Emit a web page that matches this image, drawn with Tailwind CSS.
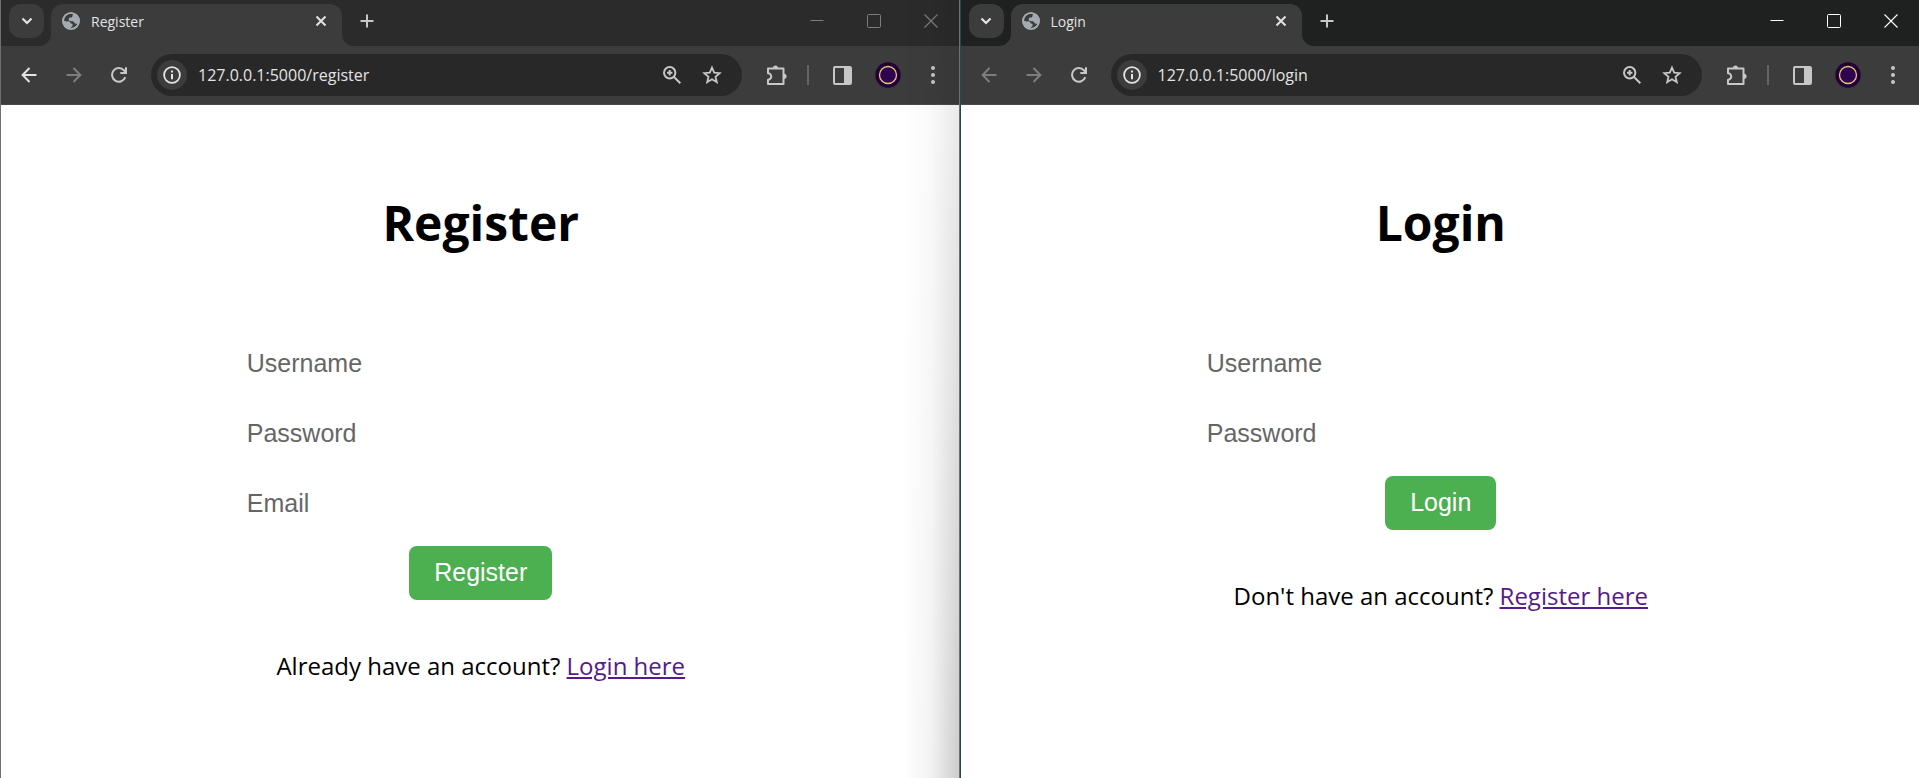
<!DOCTYPE html>
<html lang="en">
<head>
<meta charset="utf-8">
<title>Register and Login</title>
<script src="https://cdn.jsdelivr.net/npm/@tailwindcss/browser@4"></script>
</head>
<body class="min-h-screen bg-white font-['Open_Sans','Noto_Sans',sans-serif]">
<svg class="hidden">
  <symbol id="chevron" viewBox="0 0 12 12"><path d="M1.5 3.5 6 8l4.500-4.500" fill="none" stroke="currentColor" stroke-width="2.200"/></symbol>
  <symbol id="globe" viewBox="0 0 18 18"><circle cx="9" cy="9" r="8.800" fill="#a4aab1"/><path d="M6.200 2.200C3.500 3.200 1.900 6 1.900 8.500c1.300.9 2.800 1 4.500.8 1.500 0 2.200.9 2.200 2.300 1.400 0 2.300.6 2 2 -.2 1-1.400 1.300-1.800 2.600 3-.1 5.600-2 6.700-4.500-1.200.4-2.300.1-3-.8-.7-1.300-1.800-1.700-3.200-1.600-1.500 0-2.600-.8-2.600-2 0-1 .8-1.700 1.900-1.700 1.200 0 1.700-.4 1.700-1.200 0-1 .6-1.700 1.300-2C9.700 1.700 7.800 1.500 6.200 2.200z" fill="#3c3c3c"/><circle cx="9" cy="9" r="8" fill="none" stroke="#a4aab1" stroke-width="1.700"/></symbol>
  <symbol id="cross" viewBox="0 0 12 12"><path d="M1.500 1.500l9 9M10.500 1.500l-9 9" stroke="currentColor" stroke-width="2"/></symbol>
  <symbol id="plus" viewBox="0 0 14 14"><path d="M7 .5v13M.5 7h13" stroke="currentColor" stroke-width="2"/></symbol>
  <symbol id="minimize" viewBox="0 0 14 14"><path d="M.5 6.500h13" stroke="currentColor"/></symbol>
  <symbol id="maximize" viewBox="0 0 14 14"><rect x=".5" y=".5" width="13" height="13" rx="1" fill="none" stroke="currentColor"/></symbol>
  <symbol id="shut" viewBox="0 0 14 14"><path d="M.5.5l13 13M13.500.5l-13 13" stroke="currentColor" stroke-width="1.100"/></symbol>
  <symbol id="back" viewBox="0 0 16 16"><path d="M15.500 8H2M8.500 1 1.600 8l6.900 7" fill="none" stroke="currentColor" stroke-width="2"/></symbol>
  <symbol id="forward" viewBox="0 0 16 16"><path d="M.5 8H14M7.500 1l6.900 7-6.900 7" fill="none" stroke="currentColor" stroke-width="2"/></symbol>
  <symbol id="reload" viewBox="0 0 16 16"><path d="M14.300 10.200A6.800 6.800 0 1 1 12.900 3.300L15 5.500M15 .3v5.700H9.300" fill="none" stroke="currentColor" stroke-width="2"/></symbol>
  <symbol id="info" viewBox="0 0 18 18"><circle cx="9" cy="9" r="7.900" fill="none" stroke="currentColor" stroke-width="1.800"/><path d="M9 8v5.200M9 4.600v2" stroke="currentColor" stroke-width="2"/></symbol>
  <symbol id="zoom" viewBox="0 0 18 18"><circle cx="6.700" cy="6.700" r="5.700" fill="none" stroke="currentColor" stroke-width="2"/><path d="M11 11l6.300 6.300M6.700 4v5.400M4 6.700h5.400" stroke="currentColor" stroke-width="2"/></symbol>
  <symbol id="star" viewBox="0 0 20 20"><path d="M10 2.600l2.200 5.100 5.500.5-4.200 3.600 1.300 5.400-4.800-2.900-4.800 2.900 1.300-5.400-4.200-3.600 5.500-.5z" fill="none" stroke="currentColor" stroke-width="1.800"/></symbol>
  <symbol id="puzzle" viewBox="0 0 21 21"><path d="M2 3.500h15.500v15.500H2v-4.300a3 3 0 0 0 0-6.500z" fill="none" stroke="currentColor" stroke-width="2" stroke-linejoin="round"/><path d="M7 3a2.500 2.500 0 0 1 5 0zM18 8.700a2.600 2.600 0 0 1 0 5.200z" fill="currentColor"/></symbol>
  <symbol id="panel" viewBox="0 0 19 19"><rect x="1" y="1" width="17" height="17" rx="1.200" fill="none" stroke="currentColor" stroke-width="2"/><path d="M11 1h7v17h-7z" fill="currentColor"/></symbol>
  <symbol id="avatar" viewBox="0 0 26 26"><circle cx="13" cy="13" r="12.700" fill="#210138"/><circle cx="13" cy="13" r="8.500" fill="#2e0450" stroke="#eac27d" stroke-width="1.300"/></symbol>
  <symbol id="dots" viewBox="0 0 4 18"><circle cx="2" cy="2" r="2" fill="currentColor"/><circle cx="2" cy="9" r="2" fill="currentColor"/><circle cx="2" cy="16" r="2" fill="currentColor"/></symbol>
  <symbol id="flare" viewBox="0 0 12 12"><path d="M0 0v12h12A12 12 0 0 1 0 0z" fill="#3c3c3c"/></symbol>
</svg>

<div class="grid min-h-screen grid-cols-2">
  <!-- Register window, in the background -->
  <section class="relative flex flex-col border-x border-[#707070]">
    <header class="bg-[#3c3c3c]">
      <div class="flex h-[46px] items-end bg-[#2b2b2b] pl-2 text-[#e3e3e3]">
        <button aria-label="Search tabs" class="mb-2 flex h-[34px] w-[35px] items-center justify-center rounded-xl bg-[#3c3c3c]"><svg class="size-3"><use href="#chevron"/></svg></button>
        <div class="relative ml-[7px] flex h-[42px] w-[291px] items-center rounded-t-xl bg-[#3c3c3c] pr-[15px] pb-2 pl-[11px]">
          <svg class="absolute bottom-0 -left-3 size-3 -scale-x-100"><use href="#flare"/></svg>
          <svg class="absolute -right-3 bottom-0 size-3"><use href="#flare"/></svg>
          <svg class="size-[18px]"><use href="#globe"/></svg>
          <span class="ml-[11px] flex-1 pt-[2px] text-sm">Register</span>
          <button aria-label="Close tab" class="block"><svg class="size-3"><use href="#cross"/></svg></button>
        </div>
        <button aria-label="New tab" class="mb-[18px] ml-[18px] block text-[#c7c7c7]"><svg class="size-[14px]"><use href="#plus"/></svg></button>
        <div class="mb-[18px] ml-auto flex gap-[43px] pr-[21px] text-[#7d7d7d]">
          <button aria-label="Minimize"><svg class="size-[14px]"><use href="#minimize"/></svg></button>
          <button aria-label="Maximize"><svg class="size-[14px]"><use href="#maximize"/></svg></button>
          <button aria-label="Close"><svg class="size-[14px]"><use href="#shut"/></svg></button>
        </div>
      </div>
      <div class="flex h-[59px] items-center border-b border-[#4a4a4a] pr-6 pl-5 text-[#c7c7c7]">
        <button aria-label="Back" class="text-[#e3e3e3]"><svg class="size-4"><use href="#back"/></svg></button>
        <button aria-label="Forward" class="ml-[29px] text-[#7d7d7d]"><svg class="size-4"><use href="#forward"/></svg></button>
        <button aria-label="Reload" class="ml-[29px]"><svg class="size-4"><use href="#reload"/></svg></button>
        <div class="ml-6 flex h-[42px] flex-1 items-center rounded-full bg-[#282828] pr-5 pl-[6px]">
          <button aria-label="Site information" class="flex size-[30px] items-center justify-center rounded-full bg-[#3c3c3c] text-[#e3e3e3]"><svg class="size-[18px]"><use href="#info"/></svg></button>
          <input aria-label="Address" value="127.0.0.1:5000/register" class="ml-[11px] min-w-0 flex-1 text-base text-[#e3e3e3] outline-none">
          <button aria-label="Zoom"><svg class="size-[18px]"><use href="#zoom"/></svg></button>
          <button aria-label="Bookmark" class="ml-[21px]"><svg class="size-5"><use href="#star"/></svg></button>
        </div>
        <button aria-label="Extensions" class="ml-6"><svg class="size-[21px]"><use href="#puzzle"/></svg></button>
        <span class="ml-5 h-5 w-[2px] bg-[#636363]"></span>
        <button aria-label="Side panel" class="ml-6"><svg class="size-[19px]"><use href="#panel"/></svg></button>
        <button aria-label="Profile" class="ml-[23px]"><svg class="size-[26px]"><use href="#avatar"/></svg></button>
        <button aria-label="Menu" class="ml-[30px]"><svg class="h-[18px] w-1"><use href="#dots"/></svg></button>
      </div>
    </header>
    <main class="flex flex-1 flex-col items-center pt-[84px] pl-[2px] text-black">
      <h1 class="text-5xl leading-[68px] font-bold">Register</h1>
      <form class="mt-[79px] flex w-[490px] flex-col items-center gap-4 font-['Liberation_Sans',sans-serif] text-[25px]">
        <input aria-label="Username" type="text" placeholder="Username" class="h-[54px] w-full px-[11px] outline-none placeholder:text-[#666]">
        <input aria-label="Password" type="password" placeholder="Password" class="h-[54px] w-full px-[11px] outline-none placeholder:text-[#666]">
        <input aria-label="Email" type="email" placeholder="Email" class="h-[54px] w-full px-[11px] outline-none placeholder:text-[#666]">
        <button type="submit" class="h-[54px] rounded-lg bg-[#4caf50] px-[25px] text-white">Register</button>
      </form>
      <p class="mt-12 text-2xl leading-9">Already have an account? <a href="#login" class="text-[#551a8b] underline">Login here</a></p>
    </main>
    <!-- Shadow that the front window casts -->
    <div class="pointer-events-none absolute inset-y-0 right-0 w-14 bg-linear-to-r from-transparent via-black/5 to-black/20 mask-t-from-0% mask-t-to-150%"></div>
  </section>

  <!-- Login window, in front -->
  <section class="relative flex flex-col border-l border-[#1f4a50]">
    <header class="bg-[#3c3c3c]">
      <div class="flex h-[46px] items-end bg-[#1f2120] pl-2 text-[#e3e3e3]">
        <button aria-label="Search tabs" class="mb-2 flex h-[34px] w-[35px] items-center justify-center rounded-xl bg-[#3c3c3c]"><svg class="size-3"><use href="#chevron"/></svg></button>
        <div class="relative ml-[7px] flex h-[42px] w-[291px] items-center rounded-t-xl bg-[#3c3c3c] pr-[15px] pb-2 pl-[11px]">
          <svg class="absolute bottom-0 -left-3 size-3 -scale-x-100"><use href="#flare"/></svg>
          <svg class="absolute -right-3 bottom-0 size-3"><use href="#flare"/></svg>
          <svg class="size-[18px]"><use href="#globe"/></svg>
          <span class="ml-[11px] flex-1 pt-[2px] text-sm">Login</span>
          <button aria-label="Close tab" class="block"><svg class="size-3"><use href="#cross"/></svg></button>
        </div>
        <button aria-label="New tab" class="mb-[18px] ml-[18px] block text-[#c7c7c7]"><svg class="size-[14px]"><use href="#plus"/></svg></button>
        <div class="mb-[18px] ml-auto flex gap-[43px] pr-[21px] text-white">
          <button aria-label="Minimize"><svg class="size-[14px]"><use href="#minimize"/></svg></button>
          <button aria-label="Maximize"><svg class="size-[14px]"><use href="#maximize"/></svg></button>
          <button aria-label="Close"><svg class="size-[14px]"><use href="#shut"/></svg></button>
        </div>
      </div>
      <div class="flex h-[59px] items-center border-b border-[#4a4a4a] pr-6 pl-5 text-[#c7c7c7]">
        <button aria-label="Back" class="text-[#7d7d7d]"><svg class="size-4"><use href="#back"/></svg></button>
        <button aria-label="Forward" class="ml-[29px] text-[#7d7d7d]"><svg class="size-4"><use href="#forward"/></svg></button>
        <button aria-label="Reload" class="ml-[29px]"><svg class="size-4"><use href="#reload"/></svg></button>
        <div class="ml-6 flex h-[42px] flex-1 items-center rounded-full bg-[#282828] pr-5 pl-[6px]">
          <button aria-label="Site information" class="flex size-[30px] items-center justify-center rounded-full bg-[#3c3c3c] text-[#e3e3e3]"><svg class="size-[18px]"><use href="#info"/></svg></button>
          <input aria-label="Address" value="127.0.0.1:5000/login" class="ml-[11px] min-w-0 flex-1 text-base text-[#e3e3e3] outline-none">
          <button aria-label="Zoom"><svg class="size-[18px]"><use href="#zoom"/></svg></button>
          <button aria-label="Bookmark" class="ml-[21px]"><svg class="size-5"><use href="#star"/></svg></button>
        </div>
        <button aria-label="Extensions" class="ml-6"><svg class="size-[21px]"><use href="#puzzle"/></svg></button>
        <span class="ml-5 h-5 w-[2px] bg-[#636363]"></span>
        <button aria-label="Side panel" class="ml-6"><svg class="size-[19px]"><use href="#panel"/></svg></button>
        <button aria-label="Profile" class="ml-[23px]"><svg class="size-[26px]"><use href="#avatar"/></svg></button>
        <button aria-label="Menu" class="ml-[30px]"><svg class="h-[18px] w-1"><use href="#dots"/></svg></button>
      </div>
    </header>
    <main class="flex flex-1 flex-col items-center pt-[84px] pl-[2px] text-black">
      <h1 class="text-5xl leading-[68px] font-bold">Login</h1>
      <form class="mt-[79px] flex w-[490px] flex-col items-center gap-4 font-['Liberation_Sans',sans-serif] text-[25px]">
        <input aria-label="Username" type="text" placeholder="Username" class="h-[54px] w-full px-[11px] outline-none placeholder:text-[#666]">
        <input aria-label="Password" type="password" placeholder="Password" class="h-[54px] w-full px-[11px] outline-none placeholder:text-[#666]">
        <button type="submit" class="h-[54px] rounded-lg bg-[#4caf50] px-[25px] text-white">Login</button>
      </form>
      <p class="mt-12 text-2xl leading-9">Don't have an account? <a href="#register" class="text-[#551a8b] underline">Register here</a></p>
    </main>
  </section>
</div>
</body>
</html>
